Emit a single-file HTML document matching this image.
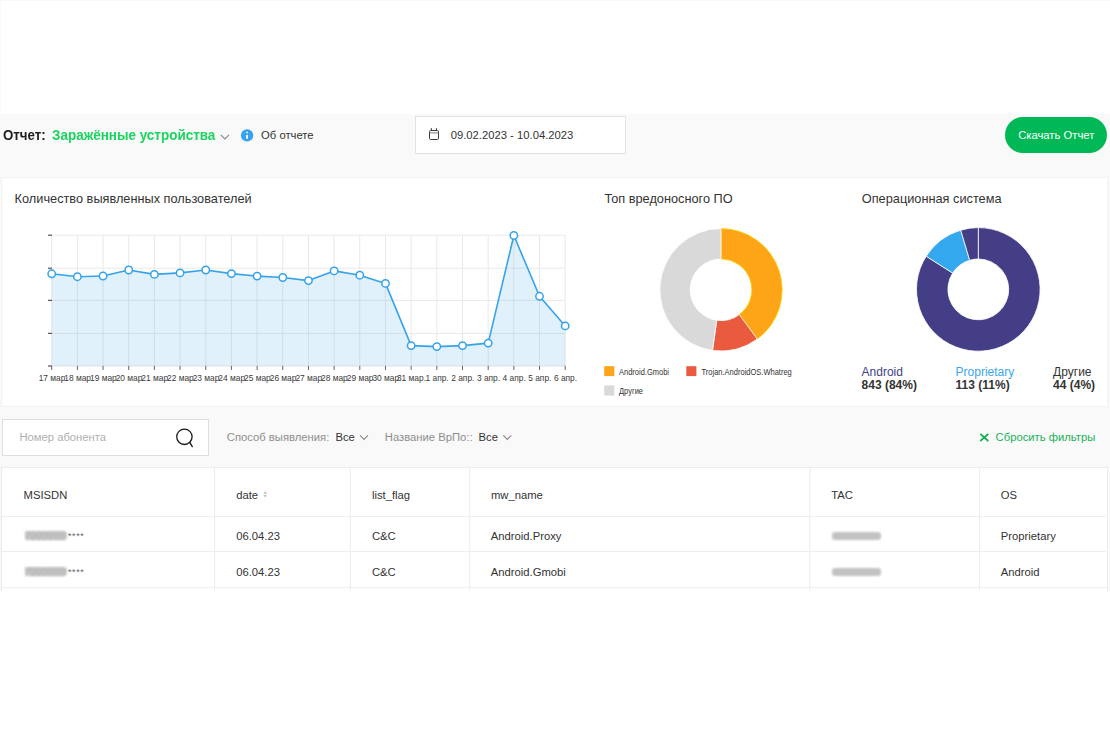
<!DOCTYPE html>
<html><head><meta charset="utf-8">
<style>
html,body{margin:0;padding:0;}
body{width:1110px;height:740px;position:relative;overflow:hidden;background:#fff;font-family:"Liberation Sans",sans-serif;}
.t{position:absolute;white-space:nowrap;line-height:1;}
.abs{position:absolute;}
</style></head><body>
<div class="abs" style="left:0;top:114px;width:1110px;height:477px;background:#f9f9f9;"></div>
<div class="abs" style="left:0;top:0;width:1110px;height:1px;background:#f8f8f8;"></div>
<div class="abs" style="left:0;top:0;width:1px;height:114px;background:#f9f9f9;"></div>
<div class="t" style="left:3.00px;top:127.75px;font-size:14px;color:#1f1f1f;font-weight:bold;transform:scaleX(0.95);transform-origin:0 0;">Отчет:</div>
<div class="t" style="left:51.90px;top:127.75px;font-size:14px;color:#1cd460;font-weight:bold;transform:scaleX(0.962);transform-origin:0 0;">Заражённые устройства</div>
<svg class="abs" style="left:0;top:0" width="1110" height="740"><polyline points="220.8,134.8 224.9,138.9 229,134.8" fill="none" stroke="#8a8a8a" stroke-width="1.2"/><circle cx="247.1" cy="135.4" r="6.2" fill="#38a2f0"/><rect x="246.2" y="134.9" width="1.8" height="3.9" fill="#fff"/><rect x="246.2" y="131.8" width="1.8" height="1.3" fill="#fff"/></svg>
<div class="t" style="left:261.10px;top:129.88px;font-size:11.25px;color:#333;font-weight:normal;">Об отчете</div>
<div class="abs" style="left:415px;top:116px;width:209px;height:35.5px;background:#fff;border:1px solid #e2e2e2;"></div>
<svg class="abs" style="left:0;top:0" width="1110" height="740"><rect x="429.5" y="130.5" width="9" height="9" rx="1.2" fill="none" stroke="#3d3d3d" stroke-width="1"/><line x1="429.5" y1="132.9" x2="438.5" y2="132.9" stroke="#7a7a7a" stroke-width="1"/><line x1="431.4" y1="128.2" x2="431.4" y2="131" stroke="#3d3d3d" stroke-width="1.1"/><line x1="436.4" y1="128.2" x2="436.4" y2="131" stroke="#3d3d3d" stroke-width="1.1"/></svg>
<div class="t" style="left:450.70px;top:130.18px;font-size:11.25px;color:#333;font-weight:normal;">09.02.2023 - 10.04.2023</div>
<div class="abs" style="left:1005px;top:117px;width:102px;height:36px;border-radius:18px;background:#00b956;"></div>
<div class="t" style="left:1018.20px;top:129.98px;font-size:11.25px;color:#fff;font-weight:normal;">Скачать Отчет</div>
<div class="abs" style="left:1px;top:177px;width:1105px;height:228px;background:#fff;border:1px solid #f2f2f2;"></div>
<div class="t" style="left:14.60px;top:192.61px;font-size:12.75px;color:#333;font-weight:normal;">Количество выявленных пользователей</div>
<div class="t" style="left:604.40px;top:192.51px;font-size:12.75px;color:#333;font-weight:normal;">Топ вредоносного ПО</div>
<div class="t" style="left:861.80px;top:192.51px;font-size:12.75px;color:#333;font-weight:normal;">Операционная система</div>
<svg class="abs" style="left:0;top:0" width="1110" height="740"><line x1="51.7" y1="235.2" x2="565.2" y2="235.2" stroke="#e9e9e9" stroke-width="1"/><line x1="51.7" y1="268.2" x2="565.2" y2="268.2" stroke="#e9e9e9" stroke-width="1"/><line x1="51.7" y1="300.4" x2="565.2" y2="300.4" stroke="#e9e9e9" stroke-width="1"/><line x1="51.7" y1="333.4" x2="565.2" y2="333.4" stroke="#e9e9e9" stroke-width="1"/><line x1="51.70" y1="235.2" x2="51.70" y2="366.0" stroke="#e9e9e9" stroke-width="1"/><line x1="77.38" y1="235.2" x2="77.38" y2="366.0" stroke="#e9e9e9" stroke-width="1"/><line x1="103.05" y1="235.2" x2="103.05" y2="366.0" stroke="#e9e9e9" stroke-width="1"/><line x1="128.73" y1="235.2" x2="128.73" y2="366.0" stroke="#e9e9e9" stroke-width="1"/><line x1="154.40" y1="235.2" x2="154.40" y2="366.0" stroke="#e9e9e9" stroke-width="1"/><line x1="180.07" y1="235.2" x2="180.07" y2="366.0" stroke="#e9e9e9" stroke-width="1"/><line x1="205.75" y1="235.2" x2="205.75" y2="366.0" stroke="#e9e9e9" stroke-width="1"/><line x1="231.43" y1="235.2" x2="231.43" y2="366.0" stroke="#e9e9e9" stroke-width="1"/><line x1="257.10" y1="235.2" x2="257.10" y2="366.0" stroke="#e9e9e9" stroke-width="1"/><line x1="282.78" y1="235.2" x2="282.78" y2="366.0" stroke="#e9e9e9" stroke-width="1"/><line x1="308.45" y1="235.2" x2="308.45" y2="366.0" stroke="#e9e9e9" stroke-width="1"/><line x1="334.12" y1="235.2" x2="334.12" y2="366.0" stroke="#e9e9e9" stroke-width="1"/><line x1="359.80" y1="235.2" x2="359.80" y2="366.0" stroke="#e9e9e9" stroke-width="1"/><line x1="385.48" y1="235.2" x2="385.48" y2="366.0" stroke="#e9e9e9" stroke-width="1"/><line x1="411.15" y1="235.2" x2="411.15" y2="366.0" stroke="#e9e9e9" stroke-width="1"/><line x1="436.82" y1="235.2" x2="436.82" y2="366.0" stroke="#e9e9e9" stroke-width="1"/><line x1="462.50" y1="235.2" x2="462.50" y2="366.0" stroke="#e9e9e9" stroke-width="1"/><line x1="488.18" y1="235.2" x2="488.18" y2="366.0" stroke="#e9e9e9" stroke-width="1"/><line x1="513.85" y1="235.2" x2="513.85" y2="366.0" stroke="#e9e9e9" stroke-width="1"/><line x1="539.52" y1="235.2" x2="539.52" y2="366.0" stroke="#e9e9e9" stroke-width="1"/><line x1="565.20" y1="235.2" x2="565.20" y2="366.0" stroke="#e9e9e9" stroke-width="1"/><line x1="51.7" y1="366.0" x2="565.2" y2="366.0" stroke="rgba(0,0,0,0.1)" stroke-width="1"/><polygon points="51.7,366.0 51.70,273.80 77.38,276.70 103.05,276.00 128.73,270.00 154.40,274.40 180.07,272.90 205.75,270.00 231.43,273.60 257.10,276.10 282.78,277.50 308.45,280.60 334.12,270.90 359.80,275.20 385.48,283.40 411.15,345.60 436.82,346.60 462.50,345.60 488.18,343.10 513.85,235.50 539.52,296.30 565.20,325.90 565.2,366.0" fill="rgba(54,162,235,0.15)"/><line x1="48" y1="235.2" x2="52.0" y2="235.2" stroke="#555" stroke-width="1.2"/><line x1="48" y1="268.2" x2="52.0" y2="268.2" stroke="#555" stroke-width="1.2"/><line x1="48" y1="300.4" x2="52.0" y2="300.4" stroke="#555" stroke-width="1.2"/><line x1="48" y1="333.4" x2="52.0" y2="333.4" stroke="#555" stroke-width="1.2"/><line x1="48" y1="366.0" x2="52.0" y2="366.0" stroke="#555" stroke-width="1.2"/><line x1="51.70" y1="366.0" x2="51.70" y2="370.0" stroke="#666" stroke-width="1"/><line x1="77.38" y1="366.0" x2="77.38" y2="370.0" stroke="#666" stroke-width="1"/><line x1="103.05" y1="366.0" x2="103.05" y2="370.0" stroke="#666" stroke-width="1"/><line x1="128.73" y1="366.0" x2="128.73" y2="370.0" stroke="#666" stroke-width="1"/><line x1="154.40" y1="366.0" x2="154.40" y2="370.0" stroke="#666" stroke-width="1"/><line x1="180.07" y1="366.0" x2="180.07" y2="370.0" stroke="#666" stroke-width="1"/><line x1="205.75" y1="366.0" x2="205.75" y2="370.0" stroke="#666" stroke-width="1"/><line x1="231.43" y1="366.0" x2="231.43" y2="370.0" stroke="#666" stroke-width="1"/><line x1="257.10" y1="366.0" x2="257.10" y2="370.0" stroke="#666" stroke-width="1"/><line x1="282.78" y1="366.0" x2="282.78" y2="370.0" stroke="#666" stroke-width="1"/><line x1="308.45" y1="366.0" x2="308.45" y2="370.0" stroke="#666" stroke-width="1"/><line x1="334.12" y1="366.0" x2="334.12" y2="370.0" stroke="#666" stroke-width="1"/><line x1="359.80" y1="366.0" x2="359.80" y2="370.0" stroke="#666" stroke-width="1"/><line x1="385.48" y1="366.0" x2="385.48" y2="370.0" stroke="#666" stroke-width="1"/><line x1="411.15" y1="366.0" x2="411.15" y2="370.0" stroke="#666" stroke-width="1"/><line x1="436.82" y1="366.0" x2="436.82" y2="370.0" stroke="#666" stroke-width="1"/><line x1="462.50" y1="366.0" x2="462.50" y2="370.0" stroke="#666" stroke-width="1"/><line x1="488.18" y1="366.0" x2="488.18" y2="370.0" stroke="#666" stroke-width="1"/><line x1="513.85" y1="366.0" x2="513.85" y2="370.0" stroke="#666" stroke-width="1"/><line x1="539.52" y1="366.0" x2="539.52" y2="370.0" stroke="#666" stroke-width="1"/><line x1="565.20" y1="366.0" x2="565.20" y2="370.0" stroke="#666" stroke-width="1"/><polyline points="51.70,273.80 77.38,276.70 103.05,276.00 128.73,270.00 154.40,274.40 180.07,272.90 205.75,270.00 231.43,273.60 257.10,276.10 282.78,277.50 308.45,280.60 334.12,270.90 359.80,275.20 385.48,283.40 411.15,345.60 436.82,346.60 462.50,345.60 488.18,343.10 513.85,235.50 539.52,296.30 565.20,325.90" fill="none" stroke="#36a2eb" stroke-width="1.6" stroke-linejoin="round"/><circle cx="51.70" cy="273.80" r="3.7" fill="#fff" stroke="#36a2eb" stroke-width="1.5"/><circle cx="77.38" cy="276.70" r="3.7" fill="#fff" stroke="#36a2eb" stroke-width="1.5"/><circle cx="103.05" cy="276.00" r="3.7" fill="#fff" stroke="#36a2eb" stroke-width="1.5"/><circle cx="128.73" cy="270.00" r="3.7" fill="#fff" stroke="#36a2eb" stroke-width="1.5"/><circle cx="154.40" cy="274.40" r="3.7" fill="#fff" stroke="#36a2eb" stroke-width="1.5"/><circle cx="180.07" cy="272.90" r="3.7" fill="#fff" stroke="#36a2eb" stroke-width="1.5"/><circle cx="205.75" cy="270.00" r="3.7" fill="#fff" stroke="#36a2eb" stroke-width="1.5"/><circle cx="231.43" cy="273.60" r="3.7" fill="#fff" stroke="#36a2eb" stroke-width="1.5"/><circle cx="257.10" cy="276.10" r="3.7" fill="#fff" stroke="#36a2eb" stroke-width="1.5"/><circle cx="282.78" cy="277.50" r="3.7" fill="#fff" stroke="#36a2eb" stroke-width="1.5"/><circle cx="308.45" cy="280.60" r="3.7" fill="#fff" stroke="#36a2eb" stroke-width="1.5"/><circle cx="334.12" cy="270.90" r="3.7" fill="#fff" stroke="#36a2eb" stroke-width="1.5"/><circle cx="359.80" cy="275.20" r="3.7" fill="#fff" stroke="#36a2eb" stroke-width="1.5"/><circle cx="385.48" cy="283.40" r="3.7" fill="#fff" stroke="#36a2eb" stroke-width="1.5"/><circle cx="411.15" cy="345.60" r="3.7" fill="#fff" stroke="#36a2eb" stroke-width="1.5"/><circle cx="436.82" cy="346.60" r="3.7" fill="#fff" stroke="#36a2eb" stroke-width="1.5"/><circle cx="462.50" cy="345.60" r="3.7" fill="#fff" stroke="#36a2eb" stroke-width="1.5"/><circle cx="488.18" cy="343.10" r="3.7" fill="#fff" stroke="#36a2eb" stroke-width="1.5"/><circle cx="513.85" cy="235.50" r="3.7" fill="#fff" stroke="#36a2eb" stroke-width="1.5"/><circle cx="539.52" cy="296.30" r="3.7" fill="#fff" stroke="#36a2eb" stroke-width="1.5"/><circle cx="565.20" cy="325.90" r="3.7" fill="#fff" stroke="#36a2eb" stroke-width="1.5"/><text x="52.00" y="381" font-size="8.4" fill="#3a3a3a" text-anchor="middle">17 мар</text><text x="77.67" y="381" font-size="8.4" fill="#3a3a3a" text-anchor="middle">18 мар</text><text x="103.35" y="381" font-size="8.4" fill="#3a3a3a" text-anchor="middle">19 мар</text><text x="129.03" y="381" font-size="8.4" fill="#3a3a3a" text-anchor="middle">20 мар</text><text x="154.70" y="381" font-size="8.4" fill="#3a3a3a" text-anchor="middle">21 мар</text><text x="180.38" y="381" font-size="8.4" fill="#3a3a3a" text-anchor="middle">22 мар</text><text x="206.05" y="381" font-size="8.4" fill="#3a3a3a" text-anchor="middle">23 мар</text><text x="231.73" y="381" font-size="8.4" fill="#3a3a3a" text-anchor="middle">24 мар</text><text x="257.40" y="381" font-size="8.4" fill="#3a3a3a" text-anchor="middle">25 мар</text><text x="283.08" y="381" font-size="8.4" fill="#3a3a3a" text-anchor="middle">26 мар</text><text x="308.75" y="381" font-size="8.4" fill="#3a3a3a" text-anchor="middle">27 мар</text><text x="334.43" y="381" font-size="8.4" fill="#3a3a3a" text-anchor="middle">28 мар</text><text x="360.10" y="381" font-size="8.4" fill="#3a3a3a" text-anchor="middle">29 мар</text><text x="385.78" y="381" font-size="8.4" fill="#3a3a3a" text-anchor="middle">30 мар</text><text x="411.45" y="381" font-size="8.4" fill="#3a3a3a" text-anchor="middle">31 мар.</text><text x="437.12" y="381" font-size="8.4" fill="#3a3a3a" text-anchor="middle">1 апр.</text><text x="462.80" y="381" font-size="8.4" fill="#3a3a3a" text-anchor="middle">2 апр.</text><text x="488.48" y="381" font-size="8.4" fill="#3a3a3a" text-anchor="middle">3 апр.</text><text x="514.15" y="381" font-size="8.4" fill="#3a3a3a" text-anchor="middle">4 апр.</text><text x="539.82" y="381" font-size="8.4" fill="#3a3a3a" text-anchor="middle">5 апр.</text><text x="565.50" y="381" font-size="8.4" fill="#3a3a3a" text-anchor="middle">6 апр.</text></svg>
<svg class="abs" style="left:0;top:0" width="1110" height="740"><path d="M721.00,228.60 A61.2,61.2 0 0 1 757.32,339.06 L739.28,314.59 A30.8,30.8 0 0 0 721.00,259.00 Z" fill="#fda516" stroke="#ffd200" stroke-width="0.8"/><path d="M757.32,339.06 A61.2,61.2 0 0 1 712.48,350.40 L716.71,320.30 A30.8,30.8 0 0 0 739.28,314.59 Z" fill="#ea5a3e" stroke="#fff" stroke-width="0.8"/><path d="M712.48,350.40 A61.2,61.2 0 0 1 721.00,228.60 L721.00,259.00 A30.8,30.8 0 0 0 716.71,320.30 Z" fill="#d9d9d9" stroke="#fff" stroke-width="0.8"/><path d="M978.30,227.60 A61.8,61.8 0 1 1 926.18,256.19 L952.66,273.07 A30.4,30.4 0 1 0 978.30,259.00 Z" fill="#433e86" stroke="#fff" stroke-width="0.8"/><path d="M926.18,256.19 A61.8,61.8 0 0 1 960.75,230.14 L969.67,260.25 A30.4,30.4 0 0 0 952.66,273.07 Z" fill="#33a8ef" stroke="#fff" stroke-width="0.8"/><path d="M960.75,230.14 A61.8,61.8 0 0 1 978.30,227.60 L978.30,259.00 A30.4,30.4 0 0 0 969.67,260.25 Z" fill="#433e86" stroke="#fff" stroke-width="0.8"/><rect x="604.2" y="366.2" width="10.1" height="9.9" fill="#fda516"/><rect x="686.3" y="366.2" width="10.1" height="9.9" fill="#ea5a3e"/><rect x="604.2" y="385.4" width="10.1" height="10.2" fill="#d9d9d9"/><text x="619" y="375" font-size="9" fill="#333" textLength="50" lengthAdjust="spacingAndGlyphs">Android.Gmobi</text><text x="701.5" y="375" font-size="9" fill="#333" textLength="90.3" lengthAdjust="spacingAndGlyphs">Trojan.AndroidOS.Whatreg</text><text x="619" y="394.4" font-size="9" fill="#333" textLength="24" lengthAdjust="spacingAndGlyphs">Другие</text></svg>
<div class="t" style="left:861.60px;top:365.64px;font-size:12px;color:#433e86;font-weight:normal;">Android</div>
<div class="t" style="left:861.60px;top:379.34px;font-size:12px;color:#333;font-weight:bold;">843 (84%)</div>
<div class="t" style="left:955.60px;top:365.64px;font-size:12px;color:#3aa6ee;font-weight:normal;">Proprietary</div>
<div class="t" style="left:955.60px;top:379.34px;font-size:12px;color:#333;font-weight:bold;">113 (11%)</div>
<div class="t" style="left:1053.10px;top:365.64px;font-size:12px;color:#333;font-weight:normal;">Другие</div>
<div class="t" style="left:1053.10px;top:379.34px;font-size:12px;color:#333;font-weight:bold;">44 (4%)</div>
<div class="abs" style="left:2px;top:419px;width:205px;height:35px;background:#fff;border:1px solid #dedede;"></div>
<div class="t" style="left:19.40px;top:431.68px;font-size:11.25px;color:#b0b0b0;font-weight:normal;">Номер абонента</div>
<svg class="abs" style="left:0;top:0" width="1110" height="740"><circle cx="184.4" cy="436.8" r="7.7" fill="none" stroke="#1a1a1a" stroke-width="1.3"/><line x1="189.8" y1="442.3" x2="192.3" y2="446.6" stroke="#1a1a1a" stroke-width="1.3" stroke-linecap="round"/><polyline points="360.1,435.3 364.05,439.4 368,435.3" fill="none" stroke="#888" stroke-width="1.1"/><polyline points="503.3,435.3 507.3,439.4 511.3,435.3" fill="none" stroke="#888" stroke-width="1.1"/><line x1="980.3" y1="433.8" x2="988.3" y2="441" stroke="#16b156" stroke-width="1.8"/><line x1="988.3" y1="433.8" x2="980.3" y2="441" stroke="#16b156" stroke-width="1.8"/></svg>
<div class="t" style="left:226.80px;top:431.58px;font-size:11.25px;color:#8e8e8e;font-weight:normal;">Способ выявления:</div>
<div class="t" style="left:335.40px;top:431.58px;font-size:11.25px;color:#333;font-weight:normal;">Все</div>
<div class="t" style="left:384.80px;top:431.58px;font-size:11.25px;color:#8e8e8e;font-weight:normal;">Название ВрПо::</div>
<div class="t" style="left:478.60px;top:431.58px;font-size:11.25px;color:#333;font-weight:normal;">Все</div>
<div class="t" style="left:995.60px;top:431.58px;font-size:11.25px;color:#19b25a;font-weight:normal;">Сбросить фильтры</div>
<div class="abs" style="left:1px;top:466.5px;width:1107px;height:124.5px;background:#fff;border-left:1px solid #e8e8e8;border-top:1px solid #ececec;border-right:1px solid #ececec;box-sizing:border-box;"></div>
<svg class="abs" style="left:0;top:0" width="1110" height="740"><line x1="214.6" y1="467" x2="214.6" y2="590.5" stroke="#ececec" stroke-width="1"/><line x1="350.3" y1="467" x2="350.3" y2="590.5" stroke="#ececec" stroke-width="1"/><line x1="469.7" y1="467" x2="469.7" y2="590.5" stroke="#ececec" stroke-width="1"/><line x1="809.8" y1="467" x2="809.8" y2="590.5" stroke="#ececec" stroke-width="1"/><line x1="979.6" y1="467" x2="979.6" y2="590.5" stroke="#ececec" stroke-width="1"/><line x1="2" y1="516.5" x2="1106" y2="516.5" stroke="#eeeeee" stroke-width="1"/><line x1="2" y1="551.5" x2="1106" y2="551.5" stroke="#eeeeee" stroke-width="1"/><line x1="2" y1="587.7" x2="1106" y2="587.7" stroke="#eeeeee" stroke-width="1"/><path d="M263.2,493.8 L265.2,491.1 L267.2,493.8 Z M263.2,495 L265.2,497.6 L267.2,495 Z" fill="#c6c6c6"/></svg>
<div class="t" style="left:23.60px;top:489.68px;font-size:11.25px;color:#333;font-weight:normal;">MSISDN</div>
<div class="t" style="left:236.20px;top:489.68px;font-size:11.25px;color:#333;font-weight:normal;">date</div>
<div class="t" style="left:371.90px;top:489.68px;font-size:11.25px;color:#333;font-weight:normal;">list_flag</div>
<div class="t" style="left:490.90px;top:489.68px;font-size:11.25px;color:#333;font-weight:normal;">mw_name</div>
<div class="t" style="left:831.30px;top:489.68px;font-size:11.25px;color:#333;font-weight:normal;">TAC</div>
<div class="t" style="left:1000.80px;top:489.68px;font-size:11.25px;color:#333;font-weight:normal;">OS</div>
<div class="t" style="left:236.20px;top:531.28px;font-size:11.25px;color:#333;font-weight:normal;">06.04.23</div>
<div class="t" style="left:371.90px;top:531.28px;font-size:11.25px;color:#333;font-weight:normal;">C&C</div>
<div class="t" style="left:490.80px;top:531.28px;font-size:11.25px;color:#333;font-weight:normal;">Android.Proxy</div>
<div class="t" style="left:1000.80px;top:531.28px;font-size:11.25px;color:#333;font-weight:normal;">Proprietary</div>
<div class="abs" style="left:24.5px;top:530.9px;width:42px;height:9.5px;border-radius:3px;background:#c8c8c8;filter:blur(1.2px);"></div>
<div class="t" style="left:23.90px;top:531.28px;font-size:11.25px;color:#b0b0b0;font-weight:normal;filter:blur(1.1px);letter-spacing:-0.4px;">7999999</div>
<div class="t" style="left:68.00px;top:531.98px;font-size:9px;color:#666;font-weight:normal;letter-spacing:0.6px;">****</div>
<div class="abs" style="left:831.5px;top:531.9px;width:49px;height:8px;border-radius:3px;background:#c2c2c2;filter:blur(1px);"></div>
<div class="t" style="left:236.20px;top:567.08px;font-size:11.25px;color:#333;font-weight:normal;">06.04.23</div>
<div class="t" style="left:371.90px;top:567.08px;font-size:11.25px;color:#333;font-weight:normal;">C&C</div>
<div class="t" style="left:490.80px;top:567.08px;font-size:11.25px;color:#333;font-weight:normal;">Android.Gmobi</div>
<div class="t" style="left:1000.80px;top:567.08px;font-size:11.25px;color:#333;font-weight:normal;">Android</div>
<div class="abs" style="left:24.5px;top:566.7px;width:42px;height:9.5px;border-radius:3px;background:#c8c8c8;filter:blur(1.2px);"></div>
<div class="t" style="left:23.90px;top:567.08px;font-size:11.25px;color:#b0b0b0;font-weight:normal;filter:blur(1.1px);letter-spacing:-0.4px;">7999999</div>
<div class="t" style="left:68.00px;top:567.78px;font-size:9px;color:#666;font-weight:normal;letter-spacing:0.6px;">****</div>
<div class="abs" style="left:831.5px;top:567.7px;width:49px;height:8px;border-radius:3px;background:#c2c2c2;filter:blur(1px);"></div>
</body></html>
